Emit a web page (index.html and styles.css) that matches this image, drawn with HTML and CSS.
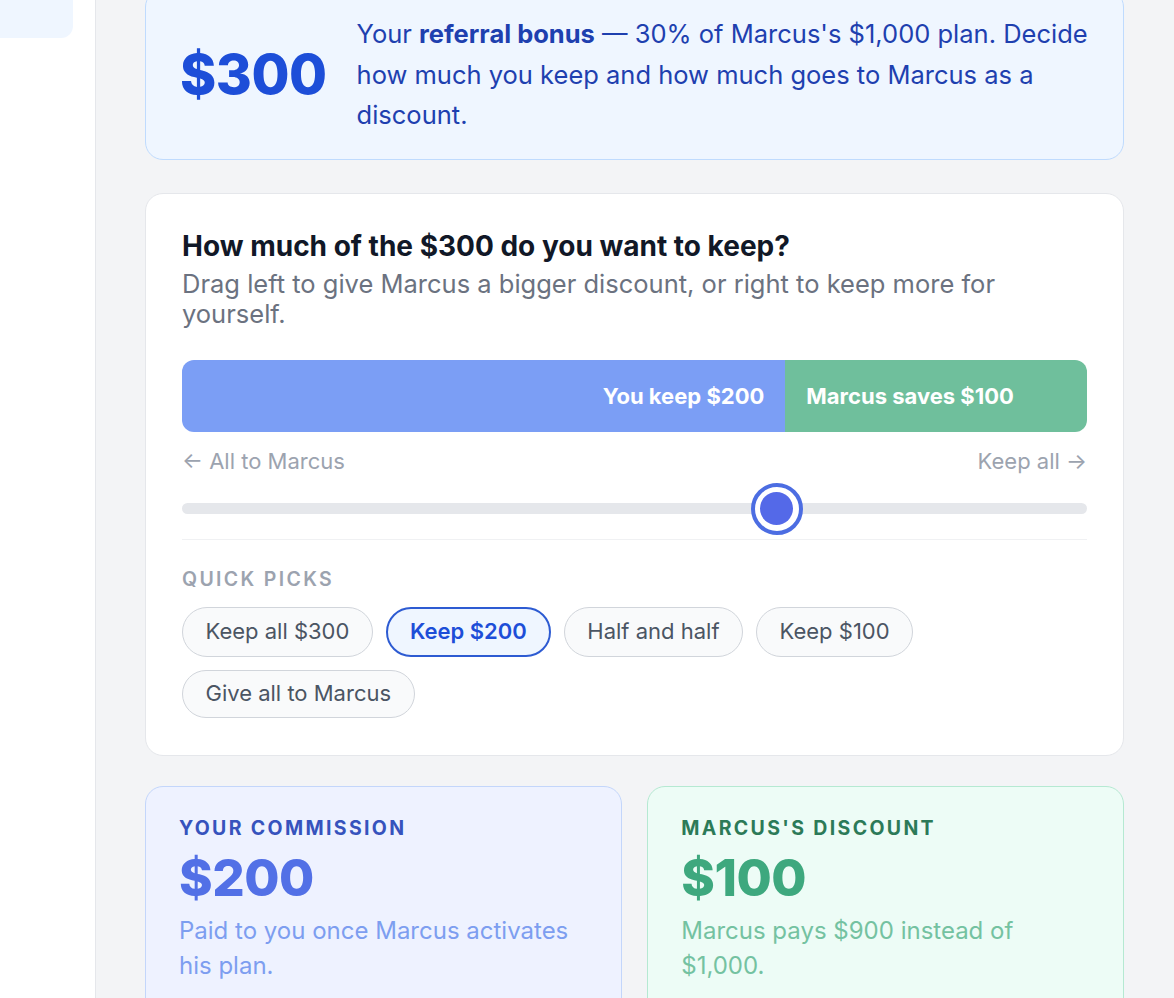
FILE: index.html
```html
<!DOCTYPE html>
<html lang="en">
<head>
<meta charset="utf-8">
<title>Referral split</title>
<link rel="stylesheet" href="styles.css">
</head>
<body>
<div class="app">
  <aside class="sidebar">
    <div class="nav-item"></div>
  </aside>
  <main class="main">
    <section class="bonus-card">
      <div class="bonus-amount">$300</div>
      <p class="bonus-text">Your <strong>referral bonus</strong> — 30% of Marcus's $1,000 plan. Decide how much you keep and how much goes to Marcus as a discount.</p>
    </section>

    <section class="split-card">
      <h2 class="split-title">How much of the $300 do you want to keep?</h2>
      <p class="split-sub">Drag left to give Marcus a bigger discount, or right to keep more for yourself.</p>

      <div class="split-bar">
        <div class="split-keep" style="width: 66.667%;">You keep $200</div>
        <div class="split-save">Marcus saves $100</div>
      </div>

      <div class="split-ends">
        <span>← All to Marcus</span>
        <span>Keep all →</span>
      </div>

      <div class="slider">
        <div class="slider-track"></div>
        <div class="slider-thumb" style="left: calc((100% - 52px) * 0.6667);"><span class="slider-dot"></span></div>
      </div>

      <div class="divider"></div>

      <div class="quick-label">QUICK PICKS</div>
      <div class="pills">
        <button class="pill">Keep all $300</button>
        <button class="pill pill-active">Keep $200</button>
        <button class="pill">Half and half</button>
        <button class="pill">Keep $100</button>
        <button class="pill">Give all to Marcus</button>
      </div>
    </section>

    <section class="stats">
      <div class="stat stat-blue">
        <div class="stat-label">YOUR COMMISSION</div>
        <div class="stat-value">$200</div>
        <p class="stat-text">Paid to you once Marcus activates his plan.</p>
      </div>
      <div class="stat stat-green">
        <div class="stat-label">MARCUS'S DISCOUNT</div>
        <div class="stat-value">$100</div>
        <p class="stat-text">Marcus pays $900 instead of $1,000.</p>
      </div>
    </section>
  </main>
</div>
</body>
</html>
```

FILE: styles.css
```css
* { box-sizing: border-box; }

html, body {
  margin: 0;
  padding: 0;
  height: 100%;
  overflow: hidden;
}

body {
  font-family: Inter, "Noto Sans", "Liberation Sans", sans-serif;
  background: #f3f4f6;
  color: #111827;
}

.app {
  display: flex;
  min-height: 100vh;
}

.sidebar {
  width: 96px;
  flex: 0 0 96px;
  background: #ffffff;
  border-right: 1.5px solid #e5e7eb;
}

.nav-item {
  width: 73px;
  height: 60px;
  margin-top: -22px;
  background: #eff6ff;
  border-radius: 0 12px 12px 0;
}

.main {
  flex: 1;
  min-width: 0;
  padding: 0 50px 0 49px;
}

/* Top bonus card */
.bonus-card {
  margin-top: -11px;
  display: flex;
  align-items: center;
  gap: 30px;
  padding: 24px 32px 23px 34px;
  background: #eff6ff;
  border: 1.5px solid #bfdbfe;
  border-radius: 18px;
}

.bonus-amount {
  font-size: 55px;
  font-weight: 800;
  color: #1d4ed8;
  letter-spacing: -0.5px;
  line-height: 1;
  white-space: nowrap;
}

.bonus-text {
  margin: 0;
  font-size: 25.5px;
  line-height: 40.5px;
  color: #1e40af;
}

.bonus-text strong { font-weight: 700; }

/* Split card */
.split-card {
  margin-top: 33px;
  background: #ffffff;
  border: 1.5px solid #e5e7eb;
  border-radius: 18px;
  padding: 34px 36px 37px;
}

.split-title {
  margin: 0;
  font-size: 28px;
  font-weight: 700;
  line-height: 37.5px;
  color: #111827;
}

.split-sub {
  margin: 4px 0 0;
  font-size: 25.5px;
  line-height: 30px;
  color: #6b7280;
}

.split-bar {
  margin-top: 31px;
  height: 72px;
  display: flex;
  border-radius: 12px;
  overflow: hidden;
  font-size: 22px;
  font-weight: 700;
  color: #ffffff;
}

.split-keep {
  background: #7b9ef5;
  display: flex;
  align-items: center;
  justify-content: flex-end;
  padding: 0 21px;
}

.split-save {
  flex: 1;
  background: #6fbf9c;
  display: flex;
  align-items: center;
  padding: 0 21px;
}

.split-ends {
  margin-top: 14px;
  display: flex;
  justify-content: space-between;
  font-size: 22px;
  line-height: 31.5px;
  color: #9ca3af;
}

.slider {
  position: relative;
  margin-top: 5px;
  height: 52px;
  display: flex;
  align-items: center;
}

.slider-track {
  width: 100%;
  height: 11px;
  border-radius: 6px;
  background: #e5e7eb;
}

.slider-thumb {
  position: absolute;
  top: 0;
  width: 52px;
  height: 52px;
  border-radius: 50%;
  border: 4.5px solid #4c6de2;
  background: #ffffff;
  display: flex;
  align-items: center;
  justify-content: center;
}

.slider-dot {
  width: 33px;
  height: 33px;
  border-radius: 50%;
  background: #5469e8;
}

.divider {
  margin-top: 4px;
  height: 1.5px;
  background: #f0f1f3;
}

.quick-label {
  margin-top: 25px;
  font-size: 19.5px;
  line-height: 28px;
  font-weight: 600;
  letter-spacing: 0.12em;
  color: #9ca3af;
}

.pills {
  margin-top: 14px;
  display: flex;
  flex-wrap: wrap;
  gap: 13px 13px;
}

.pill {
  font-family: inherit;
  font-size: 22px;
  line-height: 31.5px;
  padding: 7.5px 22.5px;
  border: 1.5px solid #d1d5db;
  border-radius: 999px;
  background: #f9fafb;
  color: #4b5563;
  cursor: pointer;
}

.pill-active {
  border: 2px solid #2d5bd2;
  padding: 7px 22px;
  background: #eff6ff;
  color: #1d4ed8;
  font-weight: 600;
}

/* Stats */
.stats {
  margin-top: 30px;
  display: grid;
  grid-template-columns: 1fr 1fr;
  gap: 25.5px;
}

.stat {
  border: 1.5px solid;
  border-radius: 18px;
  padding: 26px 33px 40px;
}

.stat-blue {
  background: #eef2ff;
  border-color: #c3d6fb;
}

.stat-green {
  background: #edfcf6;
  border-color: #b5e9d2;
}

.stat-label {
  font-size: 19.5px;
  line-height: 30px;
  font-weight: 700;
  letter-spacing: 0.12em;
}

.stat-value {
  margin-top: 6px;
  font-size: 51px;
  line-height: 58px;
  font-weight: 800;
  letter-spacing: -0.5px;
}

.stat-text {
  margin: 6px 0 0;
  font-size: 24px;
  line-height: 35px;
}

.stat-blue .stat-label { color: #3653bd; }
.stat-blue .stat-value { color: #5270e6; }
.stat-blue .stat-text { color: #7d9ef0; }

.stat-green .stat-label { color: #2c7a58; }
.stat-green .stat-value { color: #3ea87e; }
.stat-green .stat-text { color: #74c2a1; }
```
